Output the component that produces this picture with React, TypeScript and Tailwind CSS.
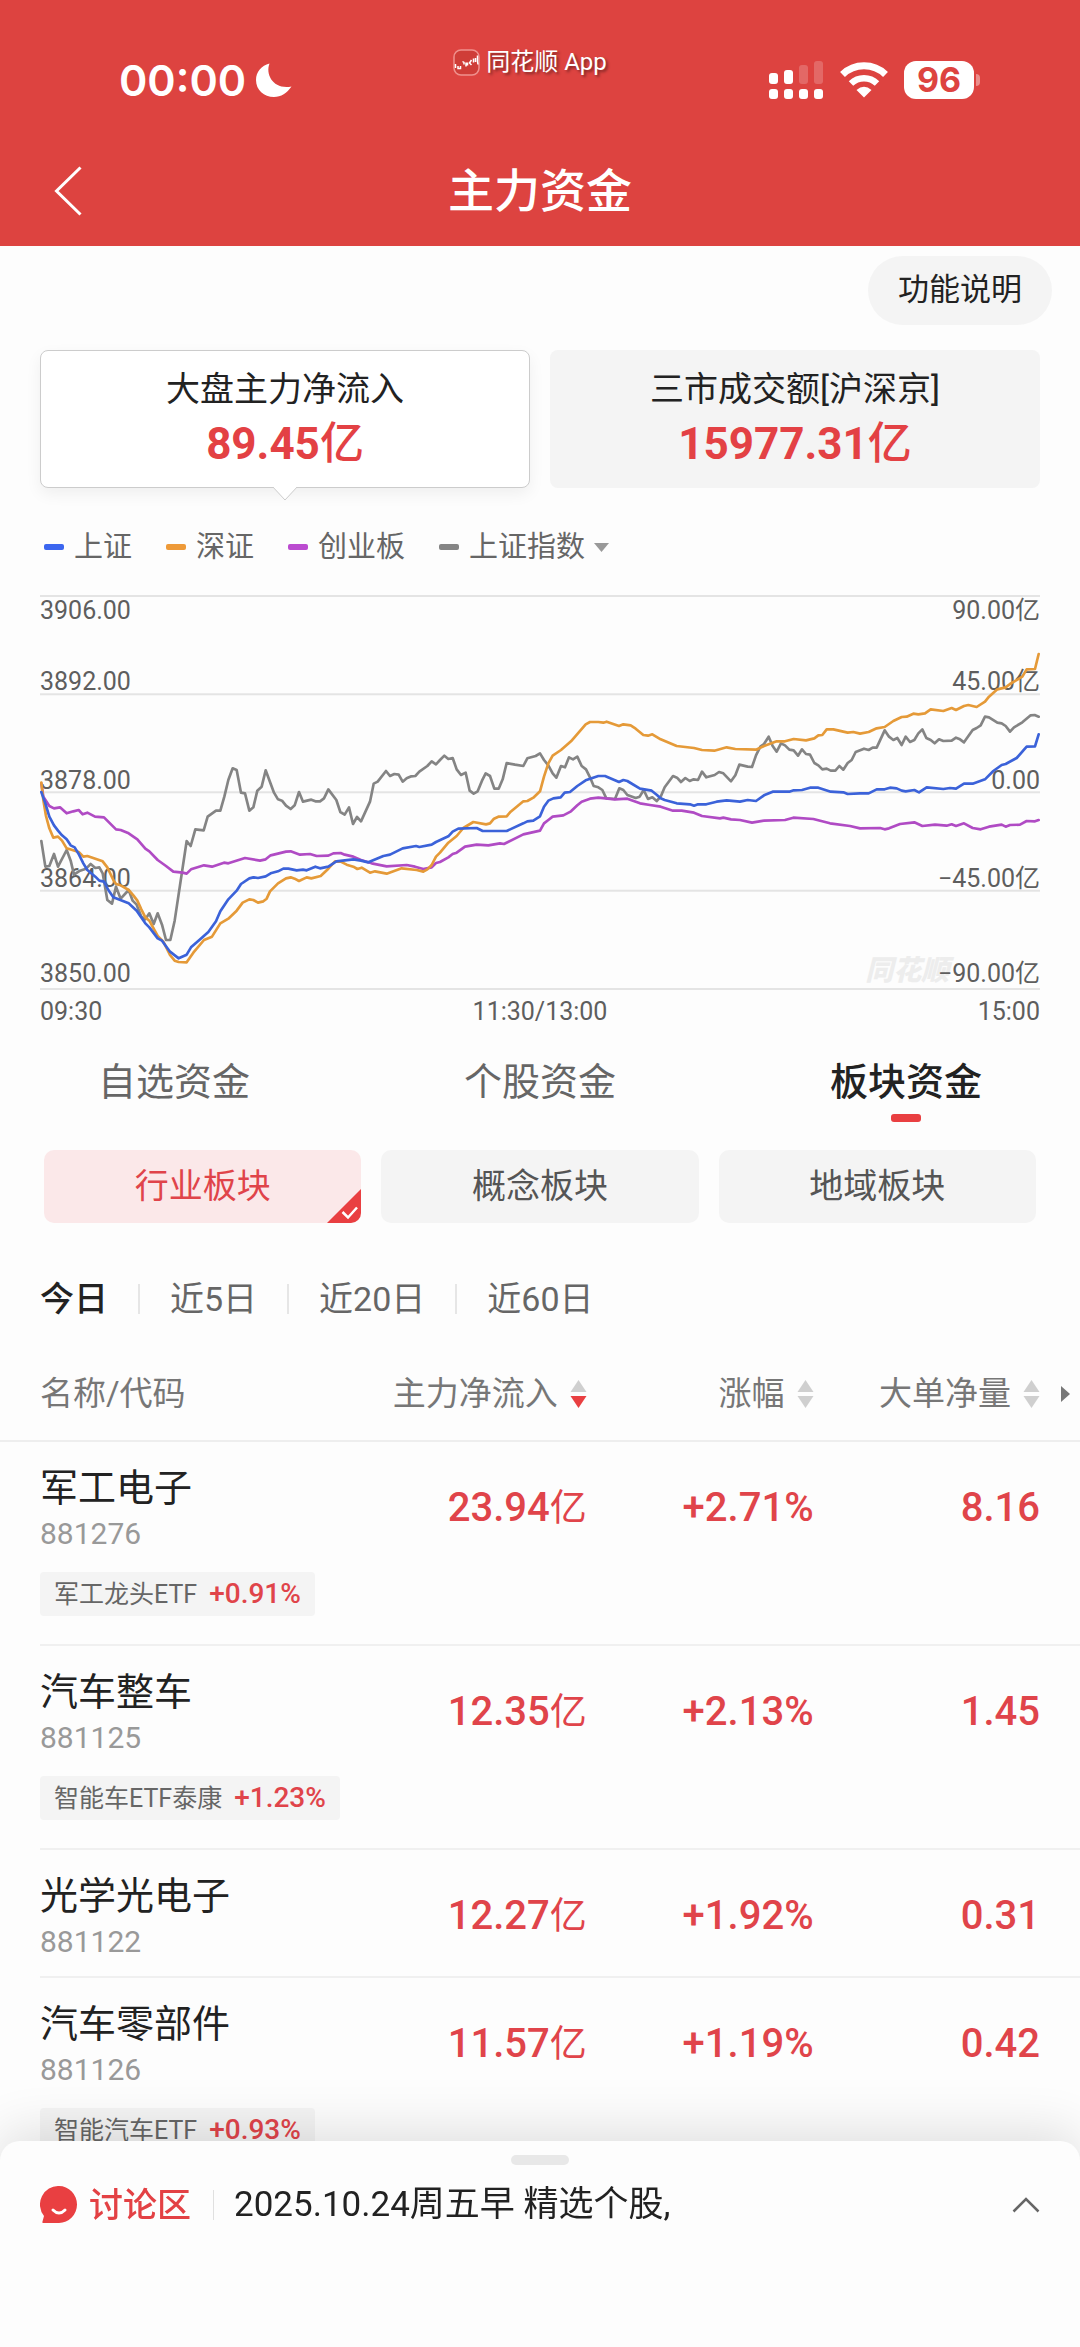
import React from 'react';

const lines = [
  {
    name: '上证指数',
    color: '#848484',
    points:
      '124,783 136,860 148,858 162,822 174,860 200,810 212,842 222,884 240,872 258,866 272,852 286,864 298,862 308,880 322,960 336,971 348,920 362,956 386,930 398,962 410,974 424,1010 436,1018 448,1000 461,1032 473,1000 486,1034 498,1080 511,1080 524,1022 560,783 572,798 586,748 611,751 623,710 648,692 661,692 673,650 685,600 698,565 710,570 723,638 735,640 748,692 760,682 772,632 785,620 797,571 822,638 834,658 846,662 858,677 872,687 884,676 897,636 909,665 934,659 946,664 960,664 972,655 985,628 1009,660 1021,696 1034,704 1047,682 1059,732 1071,711 1083,724 1110,665 1121,611 1133,605 1158,573 1170,588 1183,582 1196,584 1208,605 1220,595 1234,589 1246,588 1258,575 1282,558 1295,544 1308,553 1320,540 1333,527 1345,537 1358,534 1370,568 1383,585 1397,578 1409,632 1421,641 1433,634 1446,602 1457,580 1470,588 1483,626 1496,626 1508,598 1520,549 1545,554 1570,558 1582,535 1607,528 1620,520 1632,540 1645,556 1658,580 1669,593 1683,558 1695,562 1707,532 1719,538 1732,530 1745,558 1758,568 1770,592 1781,618 1795,622 1807,630 1819,655 1845,657 1858,625 1870,630 1882,645 1907,654 1919,650 1931,630 1944,657 1957,652 1970,663 1982,650 1994,622 2019,588 2031,593 2043,606 2056,594 2069,603 2081,598 2094,600 2106,575 2119,592 2144,585 2157,576 2170,580 2193,604 2206,586 2218,554 2243,560 2256,561 2268,526 2281,500 2292,492 2306,470 2318,498 2330,515 2343,490 2355,496 2368,509 2381,511 2394,527 2406,508 2418,522 2430,524 2443,549 2455,556 2467,568 2480,566 2492,572 2506,572 2518,558 2530,569 2543,549 2555,540 2567,516 2592,506 2606,510 2618,503 2630,503 2654,451 2667,470 2680,480 2692,474 2705,495 2717,470 2730,486 2743,480 2755,460 2767,448 2779,474 2792,480 2804,490 2817,478 2830,483 2855,482 2868,473 2880,478 2892,487 2918,450 2930,444 2942,436 2955,410 2967,412 2992,428 3005,430 3017,438 3030,455 3042,442 3067,427 3092,406 3104,405 3116,410',
  },
  {
    name: '创业板',
    color: '#b04bc4',
    points:
      '124,610 130,650 148,678 162,685 180,682 200,700 220,694 236,690 248,703 262,698 285,710 312,712 348,748 362,750 386,760 412,778 436,806 448,814 473,840 498,858 520,875 548,878 560,881 573,868 612,856 636,860 672,848 685,850 735,834 780,842 797,838 812,826 858,815 872,814 900,824 930,822 950,828 985,827 1000,820 1022,819 1034,824 1060,830 1083,840 1115,850 1160,859 1220,855 1245,860 1270,867 1295,862 1308,849 1320,846 1345,832 1358,822 1370,818 1395,800 1430,794 1465,796 1500,790 1512,792 1570,763 1620,752 1632,730 1645,720 1658,710 1690,706 1713,694 1732,676 1745,665 1770,656 1795,653 1845,658 1882,656 1920,670 1950,675 1982,680 2019,692 2045,692 2082,698 2106,708 2160,715 2170,713 2193,718 2220,720 2256,728 2292,722 2355,720 2380,713 2440,717 2490,730 2550,738 2580,745 2640,744 2654,748 2667,745 2700,732 2743,727 2767,738 2805,734 2840,737 2855,733 2868,738 2892,730 2918,744 2942,748 2967,740 3005,734 3017,740 3030,735 3060,734 3080,723 3105,724 3116,720',
  },
  {
    name: '深证',
    color: '#e59a38',
    points:
      '124,608 130,660 138,708 148,745 160,773 174,770 186,782 200,805 236,816 250,830 262,828 308,844 322,862 340,900 348,912 362,916 386,930 400,946 412,962 424,988 436,1012 448,1022 473,1068 490,1085 510,1125 524,1142 536,1146 560,1147 580,1118 612,1080 636,1070 661,1030 685,1016 710,992 728,968 748,958 760,960 774,968 790,964 800,956 810,934 834,910 858,895 872,892 884,896 897,903 920,892 934,895 962,888 985,866 1005,844 1022,845 1040,854 1060,860 1072,867 1085,863 1110,878 1125,874 1160,881 1205,865 1250,870 1270,875 1282,868 1295,855 1308,830 1320,818 1345,788 1370,768 1390,744 1420,726 1458,733 1470,730 1482,716 1495,710 1520,709 1532,695 1570,664 1582,663 1600,653 1620,634 1632,590 1645,550 1658,527 1683,510 1713,484 1757,433 1770,426 1795,426 1810,428 1820,425 1857,438 1870,433 1892,436 1907,446 1930,465 1944,467 1957,463 1982,478 2030,498 2082,504 2106,510 2143,512 2180,502 2206,507 2268,509 2292,498 2330,484 2355,484 2381,477 2418,481 2443,475 2455,466 2467,465 2480,448 2500,448 2543,458 2560,456 2580,461 2606,456 2630,445 2654,441 2680,423 2705,411 2720,410 2740,401 2755,403 2775,400 2792,388 2830,393 2855,384 2868,390 2892,378 2905,375 2930,381 2955,365 2967,350 2992,328 3017,322 3030,312 3067,290 3080,268 3105,267 3116,222',
  },
  {
    name: '上证',
    color: '#3b62d9',
    points:
      '124,636 136,670 148,710 162,736 174,752 186,766 200,778 212,796 224,802 236,822 250,850 262,870 286,890 298,902 312,905 325,930 340,952 386,970 410,992 436,1030 448,1042 473,1075 486,1082 510,1115 536,1135 560,1124 573,1102 598,1080 625,1056 648,1024 661,994 685,958 710,932 723,912 748,895 760,892 774,894 797,889 812,880 834,874 850,866 865,866 890,871 909,869 920,871 946,860 960,865 985,860 1009,844 1060,838 1083,842 1105,847 1150,828 1170,824 1208,805 1248,798 1258,801 1295,794 1308,786 1345,769 1358,755 1375,746 1430,744 1448,753 1495,753 1520,753 1570,730 1582,724 1600,722 1620,709 1632,680 1645,662 1660,655 1682,652 1694,638 1710,636 1732,618 1757,601 1795,588 1815,588 1857,606 1870,600 1882,603 1920,626 1955,632 1970,644 1982,655 1994,660 2030,670 2070,673 2082,677 2094,673 2119,673 2150,665 2180,661 2220,665 2243,660 2268,663 2292,646 2318,635 2368,635 2381,631 2406,630 2430,623 2455,623 2492,635 2530,637 2543,642 2580,640 2606,640 2630,628 2654,628 2670,623 2690,625 2705,632 2717,634 2743,630 2757,637 2780,622 2830,627 2850,624 2868,626 2892,611 2918,611 2955,598 2980,573 3005,555 3017,552 3050,534 3080,500 3105,499 3116,463',
  },
];

const gridLines = [48, 343, 637, 932, 1227];

const axisLabels = [
  { y: 118, left: '3906.00', right: '90.00亿' },
  { y: 331, left: '3892.00', right: '45.00亿' },
  { y: 626, left: '3878.00', right: '0.00' },
  { y: 920, left: '3864.00', right: '−45.00亿' },
  { y: 1207, left: '3850.00', right: '−90.00亿' },
];

const sectors = [
  { name: '军工电子', code: '881276', flow: '23.94', change: '+2.71%', volume: '8.16', etf: '军工龙头ETF', etfChange: '+0.91%' },
  { name: '汽车整车', code: '881125', flow: '12.35', change: '+2.13%', volume: '1.45', etf: '智能车ETF泰康', etfChange: '+1.23%' },
  { name: '光学光电子', code: '881122', flow: '12.27', change: '+1.92%', volume: '0.31' },
  { name: '汽车零部件', code: '881126', flow: '11.57', change: '+1.19%', volume: '0.42', etf: '智能汽车ETF', etfChange: '+0.93%' },
];

const StatusBar: React.FC = () => (
  <div className="relative flex h-12 items-center justify-between pl-[119px] pr-[100px]">
    <div className="flex items-center gap-[10px]">
      <span className="font-['Inter',sans-serif] text-[43px] font-semibold leading-none">00:00</span>
      <svg width="36" height="34" viewBox="0 0 36 34" fill="currentColor">
        <path d="M13.5 .5C9 12 18 27 35.5 23.5C31 30 25 34 18 34C8 34 0 27 0 17C0 9 5.5 2.5 13.5 .5Z" />
      </svg>
    </div>
    <div className="absolute inset-x-0 -top-3 flex items-center justify-center gap-1.5 pr-5">
      <svg width="27" height="27" viewBox="0 0 27 27" fill="none">
        <rect x="1" y="1" width="25" height="25" rx="7" fill="#cf3d38" stroke="#ef918d" strokeWidth="1.5" />
        <path
          d="M2.5 15v4M5 17v2.5h2.5V17M9.5 12.5l1.5 1v2M13 13.5v4M14.5 13.5v3M18.5 11l-2 3 2 2M20.5 9.5v4M22.500 9v4M24.500 6.500v6l.5 3"
          stroke="#fff"
          strokeWidth="1.5"
        />
      </svg>
      <span className="text-[24px] leading-9 [text-shadow:2px_2px_3px_rgba(0,0,0,0.45)]">同花顺 App</span>
    </div>
    <div className="flex items-center gap-4">
      <svg width="56" height="38" viewBox="0 0 56 38" fill="#fff">
        <rect x="1" y="12" width="9" height="11" rx="3" />
        <rect x="16" y="9" width="9" height="14" rx="3" />
        <rect x="31" y="4" width="9" height="19" rx="3" opacity=".2" />
        <rect x="46" y="0" width="9" height="23" rx="3" opacity=".2" />
        <rect x="1" y="28" width="9" height="10" rx="3" />
        <rect x="16" y="28" width="9" height="10" rx="3" />
        <rect x="31" y="28" width="9" height="10" rx="3" />
        <rect x="46" y="28" width="9" height="10" rx="3" />
      </svg>
      <svg width="48" height="36" viewBox="0 0 48 36" fill="none" stroke="#fff">
        <path d="M2.5 12.5A31 31 0 0 1 45.5 12.5" strokeWidth="7" />
        <path d="M11 21.5A19 19 0 0 1 37 21.5" strokeWidth="6.5" />
        <path d="M24 35.5L16.5 28Q24 21.5 31.5 28Z" fill="#fff" stroke="none" />
      </svg>
      <div className="flex items-center gap-0.5">
        <span className="flex h-[38px] w-[70px] items-center justify-center rounded-[12px] bg-white font-['Inter',sans-serif] text-[34px] font-bold leading-none text-[#dd4340]">
          96
        </span>
        <span className="h-3 w-1 rounded-r-full bg-white/40" />
      </div>
    </div>
  </div>
);

const SortArrows: React.FC<{ active?: boolean }> = ({ active }) => (
  <svg width="17" height="30" viewBox="0 0 17 30">
    <path d="M8.5 1L16.5 13H.5Z" fill="#cfcfcf" />
    <path d="M8.5 29L16.5 17H.5Z" fill={active ? '#e93f41' : '#cfcfcf'} />
  </svg>
);

const FlowChart: React.FC = () => (
  <svg viewBox="120 45 3000 1185" className="block h-auto w-full" fontSize="75">
    {gridLines.map((y) => (
      <line key={y} x1="120" x2="3120" y1={y} y2={y} stroke="#e4e4e4" strokeWidth="6" />
    ))}
    <text x="2596" y="1200" fontSize="84" fontWeight="900" fontStyle="italic" fill="#ededed">
      同花顺
    </text>
    {axisLabels.map((label) => (
      <g key={label.y} fill="#5e5e5e">
        <text x="120" y={label.y}>{label.left}</text>
        <text x="3120" y={label.y} textAnchor="end">{label.right}</text>
      </g>
    ))}
    {lines.map((line) => (
      <polyline key={line.name} points={line.points} fill="none" stroke={line.color} strokeWidth="8" strokeLinejoin="round" strokeLinecap="round" />
    ))}
  </svg>
);

const App: React.FC = () => {
  return (
    <div className="min-h-screen overflow-hidden bg-[#fdfdfd] font-['Roboto','Noto_Sans_CJK_SC',sans-serif] text-[#222]">
      <header className="bg-[#dd4340] pt-14 text-white">
        <StatusBar />
        <div className="mt-8 grid h-[110px] grid-cols-[1fr_auto_1fr] items-center px-[54px]">
          <button aria-label="返回" className="justify-self-start">
            <svg width="28" height="50" viewBox="0 0 28 50" fill="none" stroke="#fff" strokeWidth="3">
              <path d="M26.5 1.5L2.5 25L26.5 48.5" />
            </svg>
          </button>
          <h1 className="text-[46px] font-medium leading-none">主力资金</h1>
        </div>
      </header>

      <main>
        <div className="flex justify-end pr-7 pt-[10px]">
          <button className="h-[69px] rounded-full bg-[#f4f4f4] px-[30px] text-[31px]">功能说明</button>
        </div>

        {/* Market totals */}
        <div className="mt-[25px] grid grid-cols-2 gap-5 px-10">
          <button className="relative flex flex-col items-center rounded-lg border border-[#ccc] bg-white pb-3 pt-[14px] shadow-[0_6px_16px_rgba(0,0,0,0.06)]">
            <span className="text-[34px] leading-[48px]">大盘主力净流入</span>
            <span className="text-[44px] font-bold leading-[62px] text-[#e34144]">
              89.45<span className="font-medium">亿</span>
            </span>
            <svg className="absolute left-1/2 top-full -translate-x-1/2" width="28" height="14" viewBox="0 0 28 14">
              <path d="M1 -1L14 13L27 -1" fill="#fff" stroke="#ccc" />
            </svg>
          </button>
          <button className="flex flex-col items-center rounded-lg bg-[#f4f4f4] pb-3 pt-[15px]">
            <span className="text-[34px] leading-[48px]">三市成交额[沪深京]</span>
            <span className="text-[44px] font-bold leading-[62px] text-[#e34144]">
              15977.31<span className="font-medium">亿</span>
            </span>
          </button>
        </div>

        {/* Chart */}
        <section className="px-10">
          <div className="mt-[39px] flex items-center gap-[34px] pl-1 text-[29px] leading-10 text-[#666]">
            <span className="flex items-center gap-[10px]">
              <i className="h-1.5 w-5 rounded-[2px] bg-[#3c66ef]" />上证
            </span>
            <span className="flex items-center gap-[10px]">
              <i className="h-1.5 w-5 rounded-[2px] bg-[#ee9a38]" />深证
            </span>
            <span className="flex items-center gap-[10px]">
              <i className="h-1.5 w-5 rounded-[2px] bg-[#bb4bd0]" />创业板
            </span>
            <label className="flex items-center gap-[10px]">
              <i className="h-1.5 w-5 rounded-[2px] bg-[#858585]" />
              <select aria-label="对比指数" className="appearance-none bg-transparent p-0 leading-10">
                <option>上证指数</option>
              </select>
              <svg className="-ml-0.5" width="15" height="9" viewBox="0 0 15 9">
                <path d="M0 0H15L7.5 9Z" fill="#999" />
              </svg>
            </label>
          </div>
          <div className="mt-7">
            <FlowChart />
          </div>
          <div className="mt-0.5 flex justify-between text-[25px] leading-10 text-[#5e5e5e]">
            <span>09:30</span>
            <span>11:30/13:00</span>
            <span>15:00</span>
          </div>
        </section>

        <nav className="mt-[22px] flex justify-between px-[98px] text-[38px] leading-[56px] text-[#666]">
          <button className="pb-3">自选资金</button>
          <button className="pb-3">个股资金</button>
          <button className="flex flex-col items-center gap-1 font-medium text-[#222]">
            板块资金
            <span className="h-2 w-[30px] rounded-[3px] bg-[#e93f41]" />
          </button>
        </nav>

        <div className="mt-7 grid grid-cols-3 gap-5 px-11 text-[34px] text-[#555]">
          <button className="relative h-[73px] overflow-hidden rounded-[10px] bg-[#fbe8e9] text-[#e0444a]">
            行业板块
            <svg className="absolute bottom-0 right-0" width="34" height="34" viewBox="0 0 34 34">
              <path d="M34 0V34H0Z" fill="#e93f41" />
              <path d="M15.5 23L21 28.5L30 18.5" fill="none" stroke="#fff" strokeWidth="2.5" />
            </svg>
          </button>
          <button className="h-[73px] rounded-[10px] bg-[#f4f4f4]">概念板块</button>
          <button className="h-[73px] rounded-[10px] bg-[#f4f4f4]">地域板块</button>
        </div>

        <div className="mt-[52px] flex items-center gap-[30px] px-10 text-[34px] leading-[48px] text-[#666]">
          <button className="font-medium text-[#222]">今日</button>
          <i className="h-[30px] w-0.5 bg-[#e6e6e6]" />
          <button>近5日</button>
          <i className="h-[30px] w-0.5 bg-[#e6e6e6]" />
          <button>近20日</button>
          <i className="h-[30px] w-0.5 bg-[#e6e6e6]" />
          <button>近60日</button>
        </div>

        {/* Sector ranking */}
        <table className="mt-6 w-full table-fixed border-separate border-spacing-0">
          <thead className="text-[33px] leading-none text-[#777]">
            <tr className="h-[95px]">
              <th className="w-1/3 border-b-2 border-[#eee] pl-10 text-left font-normal">名称/代码</th>
              <th className="w-[21%] border-b-2 border-[#eee] font-normal">
                <button className="ml-auto flex items-center gap-3">主力净流入<SortArrows active /></button>
              </th>
              <th className="w-[21%] border-b-2 border-[#eee] font-normal">
                <button className="ml-auto flex items-center gap-3">涨幅<SortArrows /></button>
              </th>
              <th className="relative border-b-2 border-[#eee] pr-10 font-normal">
                <button className="ml-auto flex items-center gap-3">大单净量<SortArrows /></button>
                <svg className="absolute right-[10px] top-1/2 -translate-y-1/2" width="9" height="16" viewBox="0 0 9 16">
                  <path d="M0 0L9 8L0 16Z" fill="#777" />
                </svg>
              </th>
            </tr>
          </thead>
          <tbody>
            {sectors.map((s) => (
              <tr key={s.code} className="align-top text-right text-[40px] font-medium leading-[52px] text-[#e0444a]">
                <td className="pl-10 text-left font-normal">
                  <div className="border-b-2 border-[#f0f0f0] pb-[14px] pt-5">
                    <div className="whitespace-nowrap text-[38px] leading-[52px] text-[#222]">{s.name}</div>
                    <div className="text-[30px] leading-10 text-[#999]">{s.code}</div>
                    {s.etf && (
                      <div className="mb-[14px] mt-[18px] flex">
                        <span className="flex h-11 items-center gap-3 whitespace-nowrap rounded bg-[#f4f4f4] px-[14px] text-[25px] leading-none text-[#666]">
                          {s.etf}
                          <b className="text-[28px] font-medium text-[#e0444a]">{s.etfChange}</b>
                        </span>
                      </div>
                    )}
                  </div>
                </td>
                <td className="border-b-2 border-[#f0f0f0] pt-10">
                  {s.flow}<span className="text-[37px] font-normal">亿</span>
                </td>
                <td className="border-b-2 border-[#f0f0f0] pt-10">{s.change}</td>
                <td className="border-b-2 border-[#f0f0f0] pr-10 pt-10">{s.volume}</td>
              </tr>
            ))}
          </tbody>
        </table>
      </main>

      {/* Discussion sheet */}
      <footer className="fixed inset-x-0 bottom-0 rounded-t-[20px] bg-[#fdfdfd] pb-[118px] pt-[14px] shadow-[0_-10px_50px_rgba(0,0,0,0.12)]">
        <div className="mx-auto h-[10px] w-[58px] rounded-[5px] bg-[#e8e8e8]" />
        <div className="mt-4 flex h-12 items-center px-10">
          <svg width="37" height="38" viewBox="0 0 37 38">
            <path d="M19 0A18 18.5 0 1 1 19 37H3.5Q2 37 2.5 35.5L4 30A18.5 18.5 0 0 1 19 0Z" fill="#e93f41" />
            <path d="M13 24Q19 30 25 24" fill="none" stroke="#fff" strokeWidth="3" strokeLinecap="round" />
          </svg>
          <a href="#discussion" className="ml-3 text-[34px] font-medium text-[#e34144]">讨论区</a>
          <i className="ml-[22px] mr-5 h-[30px] w-px bg-[#e0e0e0]" />
          <p className="flex-1 text-[35px]">2025.10.24周五早 精选个股,</p>
          <button aria-label="展开">
            <svg width="28" height="16" viewBox="0 0 28 16" fill="none" stroke="#666" strokeWidth="2.5">
              <path d="M1.5 14.5L14 2L26.5 14.5" />
            </svg>
          </button>
        </div>
      </footer>
    </div>
  );
};

export default App;
